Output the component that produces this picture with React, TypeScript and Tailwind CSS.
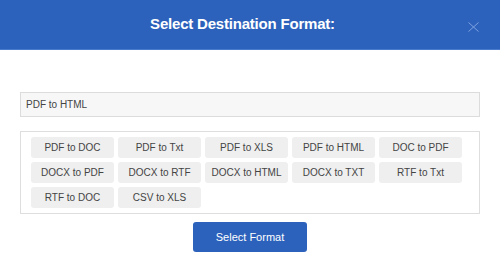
const formats = [
  'PDF to DOC',
  'PDF to Txt',
  'PDF to XLS',
  'PDF to HTML',
  'DOC to PDF',
  'DOCX to PDF',
  'DOCX to RTF',
  'DOCX to HTML',
  'DOCX to TXT',
  'RTF to Txt',
  'RTF to DOC',
  'CSV to XLS',
];

export default function App() {
  return (
    <div className="w-[500px] h-[278px] bg-white font-['Liberation_Sans',Arial,sans-serif]">
      {/* Header */}
      <div className="relative h-[50px] bg-[#2c62bc] border-b border-[#4a7acb] flex items-center justify-center">
        <h2 className="text-white font-bold text-[15px] tracking-[-0.2px] pr-[15px]">Select Destination Format:</h2>
        <svg className="absolute right-[21px] top-[22px] w-[11px] h-[10px]" viewBox="0 0 11 10" fill="none">
          <path d="M0.5 0.5l10 9M10.5 0.5l-10 9" stroke="#7fa2e0" strokeWidth="1" />
        </svg>
      </div>

      {/* Body */}
      <div className="px-5 pt-[42px]">
        <div className="h-[25px] bg-[#f7f7f7] border border-[#dcdcdc] flex items-center px-[5px] text-[10px] text-[#444]">
          PDF to HTML
        </div>

        <div className="mt-[14px] border border-[#dedede] pl-[10px] pt-[5px] pb-[5px] pr-[19px]">
          <div className="grid grid-cols-[repeat(5,83px)] gap-x-[4px] gap-y-[4px]">
            {formats.map((f) => (
              <button
                key={f}
                className="h-[21px] bg-[#efefef] rounded-[3px] text-[10px] text-[#444] flex items-center justify-center"
              >
                {f}
              </button>
            ))}
          </div>
        </div>

        <div className="flex justify-center mt-[8px]">
          <button className="w-[114px] h-[30px] bg-[#2c62bc] rounded-[3px] text-white text-[11px]">
            Select Format
          </button>
        </div>
      </div>
    </div>
  );
}
